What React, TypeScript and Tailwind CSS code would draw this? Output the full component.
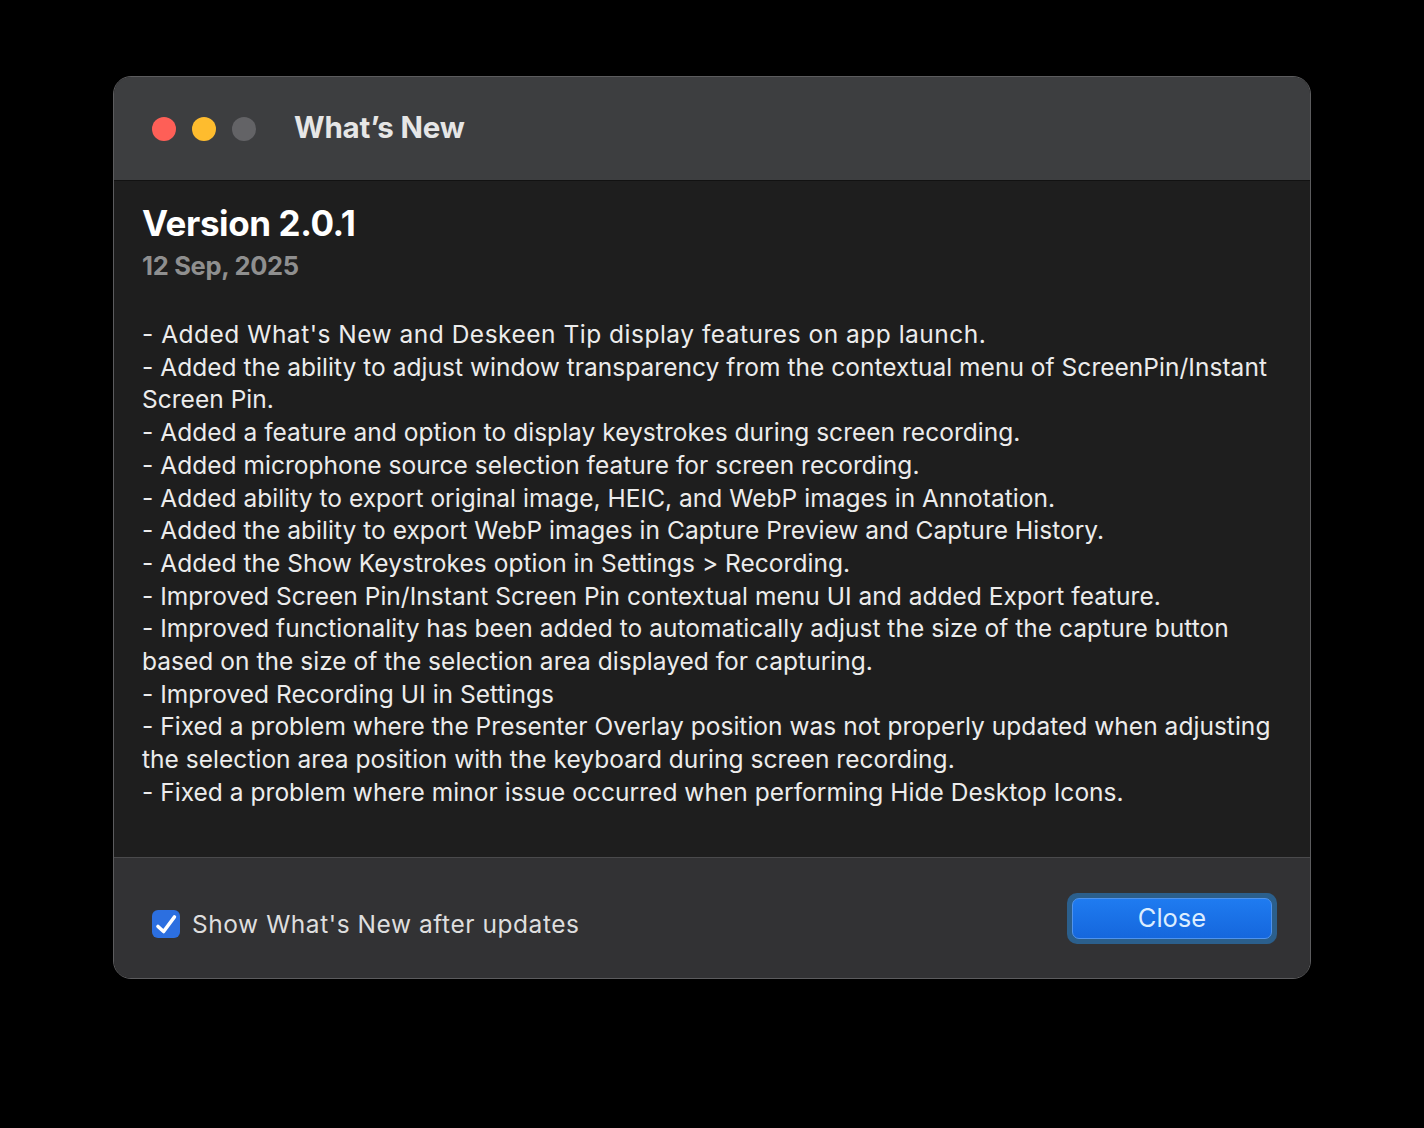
import React from "react";

const lines: string[] = [
  "- Added What's New and Deskeen Tip display features on app launch.",
  "- Added the ability to adjust window transparency from the contextual menu of ScreenPin/Instant",
  "Screen Pin.",
  "- Added a feature and option to display keystrokes during screen recording.",
  "- Added microphone source selection feature for screen recording.",
  "- Added ability to export original image, HEIC, and WebP images in Annotation.",
  "- Added the ability to export WebP images in Capture Preview and Capture History.",
  "- Added the Show Keystrokes option in Settings > Recording.",
  "- Improved Screen Pin/Instant Screen Pin contextual menu UI and added Export feature.",
  "- Improved functionality has been added to automatically adjust the size of the capture button",
  "based on the size of the selection area displayed for capturing.",
  "- Improved Recording UI in Settings",
  "- Fixed a problem where the Presenter Overlay position was not properly updated when adjusting",
  "the selection area position with the keyboard during screen recording.",
  "- Fixed a problem where minor issue occurred when performing Hide Desktop Icons.",
];

export default function App() {
  return (
    <div
      className="w-[1424px] h-[1128px] bg-black pt-[76px] pl-[113px]"
      style={{ fontFamily: "Inter, 'Noto Sans', sans-serif" }}
    >
      <div className="w-[1198px] h-[903px] rounded-[18px] border border-[#5c5c5e] overflow-hidden flex flex-col bg-[#1e1e1e]">
        {/* Title bar */}
        <div className="h-[104px] shrink-0 bg-[#3d3e40] border-b border-[#121212] flex items-center pl-[38px]">
          <div className="flex items-center gap-[16px]">
            <div className="w-[24px] h-[24px] rounded-full bg-[#fe5f57]" />
            <div className="w-[24px] h-[24px] rounded-full bg-[#febc2e]" />
            <div className="w-[24px] h-[24px] rounded-full bg-[#636366]" />
          </div>
          <div className="ml-[38px] text-[29.5px] font-bold text-[#e6e6e6] tracking-[-0.2px] mt-[-2px]">
            What’s New
          </div>
        </div>
        {/* Content */}
        <div className="flex-1 bg-[#1e1e1e] pl-[28px] pt-[20px]">
          <div className="text-[35px] leading-[44px] font-bold text-white tracking-[-0.4px]">
            Version 2.0.1
          </div>
          <div className="text-[25.5px] leading-[32px] font-bold text-[#8f8f8f] mt-[5px] tracking-[-0.3px]">
            12 Sep, 2025
          </div>
          <div className="mt-[36px] text-[24.5px] leading-[32.7px] text-[#ececec] tracking-[0.03px]">
            {lines.map((l, i) => (
              <div
                key={i}
                className={
                  i === 0
                    ? "whitespace-nowrap tracking-[0.5px]"
                    : "whitespace-nowrap"
                }
              >
                {l}
              </div>
            ))}
          </div>
        </div>
        {/* Footer */}
        <div className="h-[121px] shrink-0 bg-[#323234] border-t border-[#4a4a4c] flex items-center justify-between pl-[38px] pr-[33px]">
          <div className="flex items-center gap-[12px] mt-[12px]">
            <div className="w-[28px] h-[28px] rounded-[6px] bg-[#2c6fe0] flex items-center justify-center">
              <svg width="28" height="28" viewBox="0 0 28 28">
                <path
                  d="M6 16.5 L11.6 21.5 L22.4 7"
                  fill="none"
                  stroke="white"
                  strokeWidth="3.6"
                  strokeLinecap="round"
                  strokeLinejoin="round"
                />
              </svg>
            </div>
            <div className="text-[24.5px] text-[#dedede] tracking-[0.55px]">
              Show What's New after updates
            </div>
          </div>
          <div className="rounded-[10px] bg-[#2b5f8c] p-[5px]">
            <div className="w-[200px] h-[41px] rounded-[7px] bg-gradient-to-b from-[#1f7bf0] to-[#1567dd] border border-[#4f93ee] flex items-center justify-center text-[25.5px] text-[#dcedff]">
              Close
            </div>
          </div>
        </div>
      </div>
    </div>
  );
}
